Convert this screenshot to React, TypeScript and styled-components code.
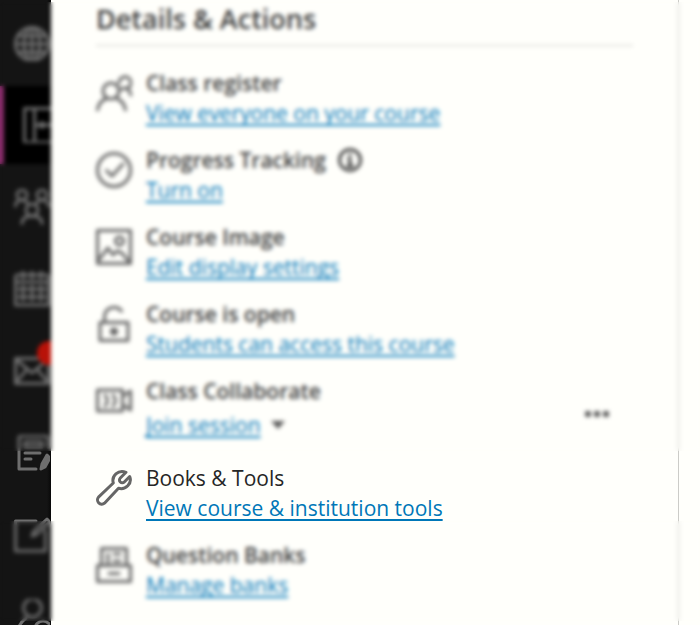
import React from "react";
import styled, { createGlobalStyle, css } from "styled-components";

const GlobalStyle = createGlobalStyle`
  *, *::before, *::after { box-sizing: border-box; }
  body {
    margin: 0;
    background: #fffffb;
    color: #262626;
    font-family: "Open Sans", "Noto Sans", sans-serif;
    font-size: 21px;
  }
`;

const Page = styled.div`
  position: relative;
  display: flex;
  height: 100vh;
  overflow: hidden;
`;

const Sidebar = styled.nav`
  display: flex;
  flex: none;
  flex-direction: column;
  gap: 4px;
  width: 51px;
  padding-top: 4px;
  overflow: hidden;
  background: linear-gradient(to right, #141414 47px, #080808 51px);
`;

const NavButton = styled.button<{ $active?: boolean }>`
  display: flex;
  flex: none;
  align-items: center;
  height: 78px;
  padding: 0 0 0 14px;
  border: 0;
  background: transparent;
  color: #6e6e6e;
  cursor: pointer;
  ${(p) =>
    p.$active &&
    css`
      padding-left: 19px;
      border-left: 4px solid #8a2d6c;
      background: #000;
    `}
`;

const NavIcon = styled.span`
  position: relative;
  display: flex;
`;

const Badge = styled.span`
  position: absolute;
  top: -12px;
  left: 23px;
  width: 32px;
  height: 24px;
  border-radius: 12px;
  background: #b81208;
`;

const Panel = styled.main`
  display: flex;
  flex: 1;
  flex-direction: column;
  min-width: 0;
  margin-right: 21px;
  padding: 0 45px;
  border-right: 1px solid #ccccc8;
`;

const Heading = styled.h2`
  margin: 0 0 22px;
  padding-bottom: 8px;
  border-bottom: 1px solid #ccccc8;
  color: #3c3c3c;
  font-size: 27px;
  font-weight: 600;
  line-height: 37px;
`;

const List = styled.ul`
  display: flex;
  flex-direction: column;
  gap: 17px;
  margin: 0;
  padding: 0;
  list-style: none;
`;

const Row = styled.li`
  display: flex;
  gap: 14px;
`;

const RowIcon = styled.span`
  display: flex;
  flex: none;
  height: 36px;
  margin-top: 7px;
  color: #666;
`;

const RowText = styled.div`
  flex: 1;
  min-width: 0;
`;

const Title = styled.h3<{ $focused?: boolean }>`
  display: flex;
  align-items: center;
  gap: 12px;
  margin: 0;
  color: ${(p) => (p.$focused ? "#262626" : "#3c3c3c")};
  font-size: 21px;
  font-weight: ${(p) => (p.$focused ? 400 : 600)};
  line-height: 30px;
`;

const LinkLine = styled.div<{ $tall?: boolean }>`
  display: flex;
  align-items: center;
  gap: 10px;
  height: ${(p) => (p.$tall ? 38 : 30)}px;
  margin-bottom: ${(p) => (p.$tall ? 2 : 0)}px;
`;

const Link = styled.a`
  color: #0077b8;
  line-height: 30px;
  text-decoration: underline;
  text-decoration-thickness: 2px;
  text-underline-offset: 3px;
  text-decoration-skip-ink: none;
  white-space: nowrap;
`;

const IconButton = styled.button`
  display: flex;
  align-items: center;
  padding: 0;
  border: 0;
  background: none;
  color: #262626;
  cursor: pointer;
`;

const MoreButton = styled(IconButton)`
  align-self: flex-end;
  margin: 0 22px 28px 0;
`;

const Veil = styled.div<{ $top: number; $height: number }>`
  position: absolute;
  top: ${(p) => p.$top}px;
  right: 0;
  left: 0;
  height: ${(p) => p.$height}px;
  backdrop-filter: blur(2px);
  pointer-events: none;
`;

function Icon({ children, width = 3 }: { children: React.ReactNode; width?: number }) {
  return (
    <svg
      width="36"
      height="36"
      viewBox="0 0 36 36"
      fill="none"
      stroke="currentColor"
      strokeWidth={width}
      strokeLinecap="round"
      strokeLinejoin="round"
      aria-hidden="true"
    >
      {children}
    </svg>
  );
}

const navItems = [
  {
    label: "Institution page",
    icon: (
      <>
        <circle cx="18" cy="19" r="16.5" />
        <ellipse cx="18" cy="19" rx="8" ry="16.5" />
        <path d="M18 2.5v33M1.5 19h33M4 11h28M4 27h28" />
      </>
    ),
  },
  {
    label: "Courses",
    active: true,
    icon: (
      <>
        <path d="M1.5 1.5h33v34h-33zM11.5 1.5v34M14 18h21" />
        <circle cx="19" cy="18" r="2" fill="currentColor" />
      </>
    ),
  },
  {
    label: "Organisations",
    icon: (
      <>
        <circle cx="8" cy="6" r="5" />
        <circle cx="28" cy="6" r="5" />
        <circle cx="18" cy="21" r="6" />
        <path d="M1.5 17c0-4 3-6 6.500-6 3 0 5 2 6 4M34.500 17c0-4-3-6-6.500-6-3 0-5 2-6 4M8 34.500c0-5 4-7.500 10-7.500s10 2.500 10 7.500" />
      </>
    ),
  },
  {
    label: "Calendar",
    icon: (
      <path d="M3.500 4h29a2 2 0 0 1 2 2v28h-33V6a2 2 0 0 1 2-2zM1.500 11h33M9 1v6M18 1v6M27 1v6M9 15v14M18 15v14M27 15v14M5 18h26M5 26h26" />
    ),
  },
  {
    label: "Messages",
    badge: true,
    icon: <path d="M1.500 5.500h33v25h-33zM1.500 6l16.500 14L34.500 6M1.500 30l11-13M34.500 30l-11-13" />,
  },
  {
    label: "Marks",
    icon: (
      <>
        <path d="M22 34H5V3a2 2 0 0 1 2-2h25a2 2 0 0 1 2 2v9M11 7h17v5H11zM11 18h15M11 24h6" />
        <path d="M33 20l-5 9-1 5 4-2 5-9z" fill="currentColor" />
      </>
    ),
  },
  {
    label: "Tools",
    icon: (
      <>
        <path d="M22 4H1.500v30h30V14" />
        <path d="M33 2l3 3-13 12-5 2 2-5z" />
      </>
    ),
  },
  {
    label: "Profile",
    icon: (
      <>
        <circle cx="18.500" cy="9" r="9" />
        <path d="M3 34c1-7 4-11 9-15" />
        <circle cx="29" cy="30" r="8" />
      </>
    ),
  },
];

const rows = [
  {
    title: "Class register",
    link: "View everyone on your course",
    icon: (
      <>
        <circle cx="15" cy="16" r="8" />
        <path d="M1.500 35c1-6 4-9.500 8-11M29.500 35c-1-6-4-9.500-8-11M23 8a6 6 0 1 1 8 5.500M31 13c2 2 3 4 4 7M31 13l-6 1" />
      </>
    ),
  },
  {
    title: "Progress Tracking",
    link: "Turn on",
    info: true,
    icon: (
      <>
        <circle cx="18" cy="18" r="16.500" />
        <path d="M10.500 18.500l5.500 5.500 11-12" />
      </>
    ),
  },
  {
    title: "Course Image",
    link: "Edit display settings",
    icon: (
      <>
        <path d="M1.500 1.500h33v33h-33zM2 32l10-13 5 7 4-4 5 2 8 10" />
        <circle cx="23.500" cy="12" r="4" />
      </>
    ),
  },
  {
    title: "Course is open",
    link: "Students can access this course",
    icon: (
      <>
        <path d="M4 16.500h28v18H4zM8.500 16V11a9.500 9.500 0 0 1 17-6" />
        <circle cx="18" cy="25.500" r="2.500" fill="currentColor" />
      </>
    ),
  },
  {
    title: "Class Collaborate",
    link: "Join session",
    menu: true,
    icon: (
      <path d="M1.500 7h25v21h-25zM27 13l7.500-5v19L27 22M9 12c3 3 3 8 0 11M17 12c3 3 3 8 0 11" />
    ),
  },
  {
    title: "Books & Tools",
    link: "View course & institution tools",
    focused: true,
    icon: (
      <path d="M30 2.300L24.300 8a2.800 2.800 0 0 0 4 4L33.700 6.500C36.500 13.500 29.500 20.300 22.500 18.300L8.500 33.200A4.300 4.300 0 0 1 2.500 27.100L17.300 13C15.300 6 22 -0.600 30 2.300Z" />
    ),
  },
  {
    title: "Question Banks",
    link: "Manage banks",
    icon: (
      <path d="M5.500 18V1.500h25V18M1.500 18.500h33v16h-33zM13 26.500h10M12 7v10M18 7h6M18 14h6" />
    ),
  },
];

export default function App() {
  return (
    <>
      <GlobalStyle />
      <Page>
        <Sidebar aria-label="Main">
          {navItems.map((item) => (
            <NavButton key={item.label} type="button" aria-label={item.label} $active={item.active}>
              <NavIcon>
                <Icon>{item.icon}</Icon>
                {item.badge && <Badge />}
              </NavIcon>
            </NavButton>
          ))}
        </Sidebar>
        <Panel>
          <Heading>Details &amp; Actions</Heading>
          <List>
            {rows.map((row) => (
              <Row key={row.title}>
                <RowIcon>
                  <Icon>{row.icon}</Icon>
                </RowIcon>
                <RowText>
                  <Title $focused={row.focused}>
                    {row.title}
                    {row.info && (
                      <IconButton type="button" aria-label="About progress tracking">
                        <svg width="24" height="24" viewBox="0 0 24 24" fill="none" stroke="currentColor" strokeWidth="2.500">
                          <circle cx="12" cy="12" r="10.500" />
                          <path d="M12 5.500v3M9.500 11H12v7M8.500 18h7" />
                        </svg>
                      </IconButton>
                    )}
                  </Title>
                  <LinkLine $tall={row.menu}>
                    <Link href="#">{row.link}</Link>
                    {row.menu && (
                      <IconButton type="button" aria-label="Session options">
                        <svg width="14" height="8" viewBox="0 0 14 8">
                          <path d="M0 0h14L7 8z" fill="#555" />
                        </svg>
                      </IconButton>
                    )}
                  </LinkLine>
                </RowText>
                {row.menu && (
                  <MoreButton type="button" aria-label="More options">
                    <svg width="28" height="8" viewBox="0 0 28 8" fill="#444">
                      <circle cx="5" cy="4" r="3" />
                      <circle cx="14" cy="4" r="3" />
                      <circle cx="23" cy="4" r="3" />
                    </svg>
                  </MoreButton>
                )}
              </Row>
            ))}
          </List>
        </Panel>
        <Veil $top={2} $height={449} />
        <Veil $top={521} $height={100} />
      </Page>
    </>
  );
}
